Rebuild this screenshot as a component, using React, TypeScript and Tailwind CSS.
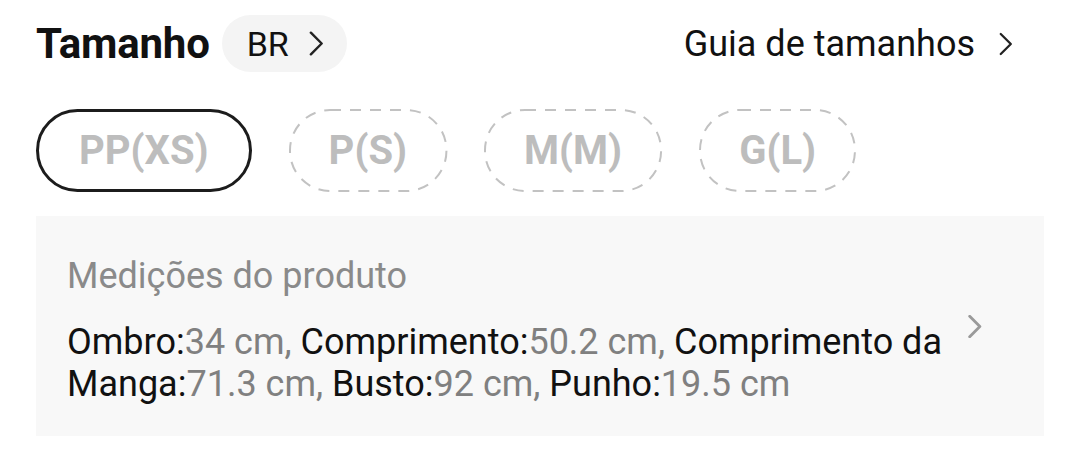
import { useState } from "react";

const sizes = ["PP(XS)", "P(S)", "M(M)", "G(L)"];

const measures = [
  { label: "Ombro", value: "34 cm" },
  { label: "Comprimento", value: "50.2 cm" },
  { label: "Comprimento da Manga", value: "71.3 cm" },
  { label: "Busto", value: "92 cm" },
  { label: "Punho", value: "19.5 cm" },
];

function Chevron({ className, width = 2.6 }: { className?: string; width?: number }) {
  return (
    <svg viewBox="0 0 16 26" fill="none" className={className}>
      <path d="M2 1.5 L13.5 13 L2 24.5" stroke="currentColor" strokeWidth={width} strokeLinecap="round" strokeLinejoin="round" />
    </svg>
  );
}

export default function App() {
  const [selected, setSelected] = useState(0);

  return (
    <div className="w-[1080px] h-[454px] bg-white px-[36px] pt-[15px] font-['Roboto','Liberation_Sans',sans-serif] text-[#111]">
      {/* header */}
      <div className="flex items-center h-[57px]">
        <span className="text-[42px] font-bold leading-none tracking-[-0.2px]">Tamanho</span>
        <button type="button" className="ml-[12px] flex items-center h-[57px] rounded-full bg-[#f4f4f4] pl-[25px] pr-[23px] gap-[20px]">
          <span className="text-[34px] leading-none">BR</span>
          <Chevron className="w-[15px] h-[25px] text-[#222]" />
        </button>
        <button type="button" className="ml-auto mr-[31px] flex items-center gap-[24px]">
          <span className="text-[36px] leading-none">Guia de tamanhos</span>
          <Chevron className="w-[14px] h-[24px] text-[#222]" />
        </button>
      </div>

      {/* sizes */}
      <div className="flex items-center gap-[37px] mt-[37px]">
        {sizes.map((s, i) => (
          <button
            key={s}
            type="button"
            onClick={() => setSelected(i)}
            className={
              i === selected
                ? "relative h-[83px] px-[40px] rounded-full border-[3px] border-[#1c1c1c] text-[40px] font-bold text-[#bdbdbd] leading-none"
                : "relative h-[83px] px-[40px] rounded-full text-[40px] font-bold text-[#bdbdbd] leading-none"
            }
          >
            {i !== selected && (
              <svg className="absolute inset-0 w-full h-full overflow-visible" preserveAspectRatio="none">
                <rect x="1" y="1" width="calc(100% - 2px)" height="calc(100% - 2px)" rx="40" ry="40" fill="none" stroke="#c2c2c2" strokeWidth="2" strokeDasharray="11 9" />
              </svg>
            )}
            <span className="relative">{s}</span>
          </button>
        ))}
      </div>

      {/* measurements */}
      <div className="mt-[24px] bg-[#f8f8f8] flex pl-[31px] pr-[61px] pt-[40px] pb-[31px]">
        <div className="flex-1">
          <div className="text-[36px] leading-[40px] text-[#8a8a8a]">Medições do produto</div>
          <p className="mt-[25px] text-[36px] leading-[42px]">
            {measures.map((m, i) => (
              <span key={m.label}>
                {m.label}:<span className="text-[#808080]">{m.value}{i < measures.length - 1 ? ", " : ""}</span>
              </span>
            ))}
          </p>
        </div>
        <Chevron className="w-[16px] h-[23px] text-[#9a9a9a] mt-[59px] shrink-0" width={3.2} />
      </div>
    </div>
  );
}
